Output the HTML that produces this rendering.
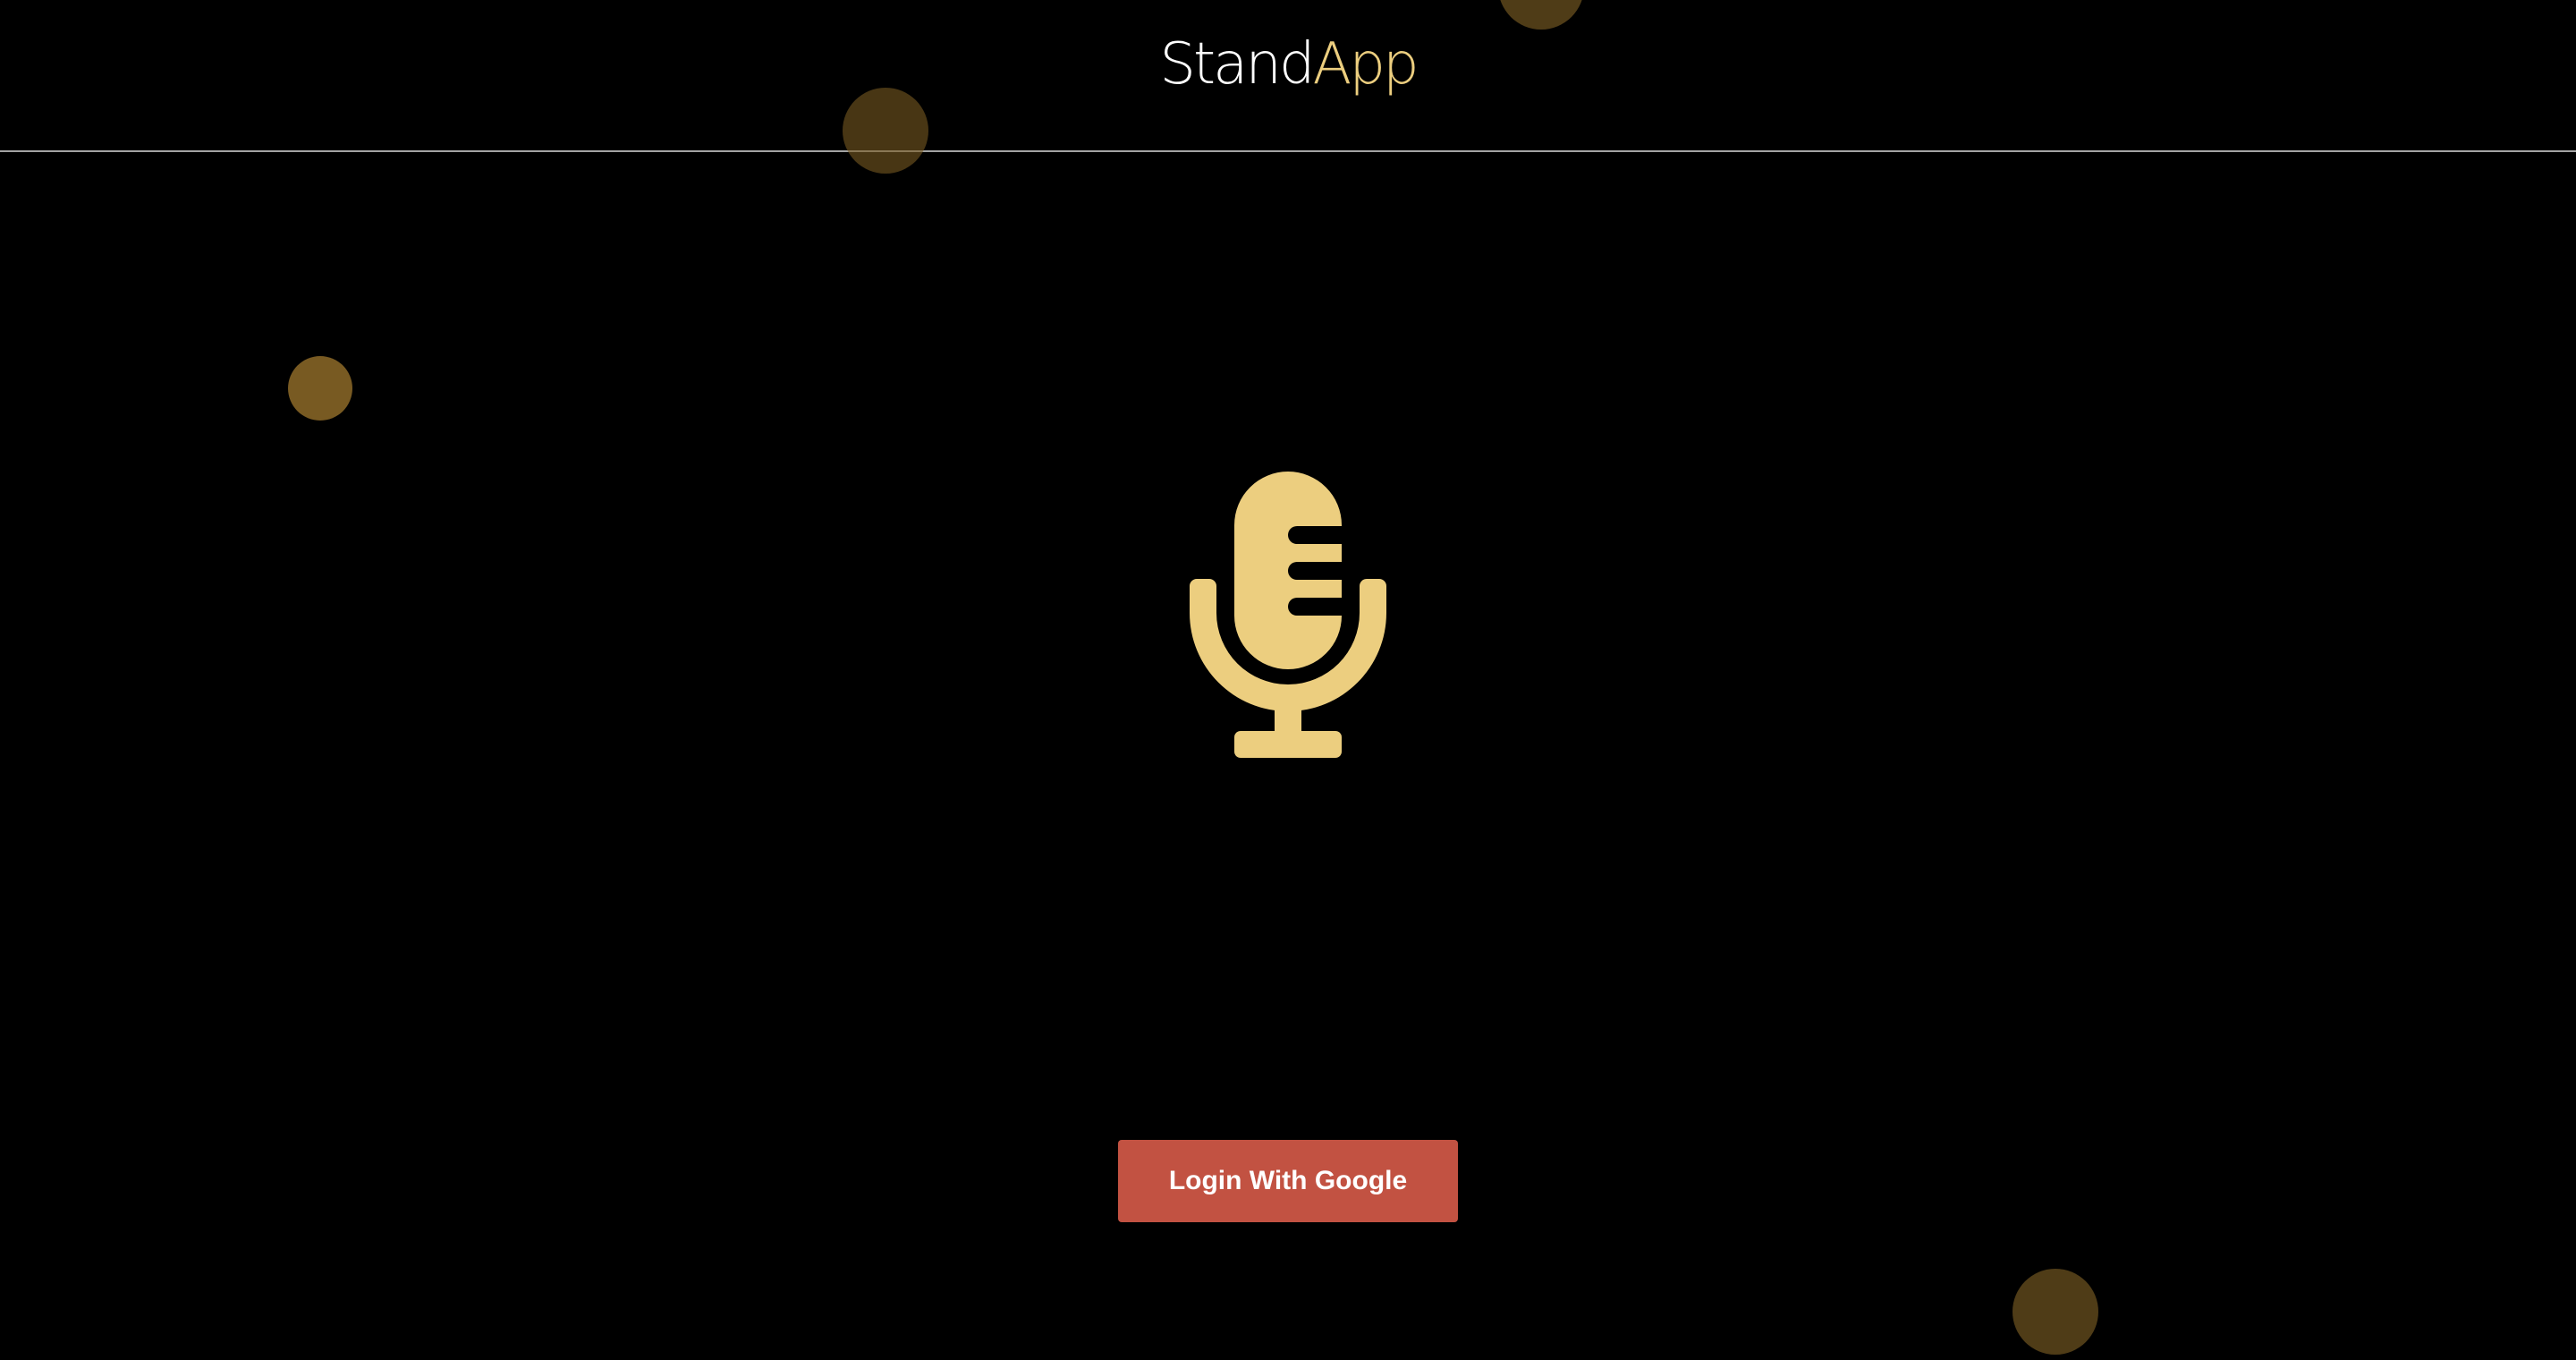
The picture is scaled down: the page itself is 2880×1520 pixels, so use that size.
<!DOCTYPE html>
<html><head><meta charset="utf-8"><style>
html,body{margin:0;padding:0;background:#000;width:2880px;height:1520px;overflow:hidden;position:relative}
.line{position:absolute;left:0;top:168px;width:2880px;height:2px;background:#a3a3a3}
.logo{position:absolute;left:0;width:2880px;top:22px;text-align:center;font-family:"DejaVu Sans","Liberation Sans",sans-serif;font-weight:200;font-size:64px;letter-spacing:-3px;line-height:100px;color:#fff}
.logo span{color:#ecce7f}
.c{position:absolute;border-radius:50%}
.btn{position:absolute;left:1250px;top:1274px;width:380px;height:92px;background:#c25242;border-radius:4px;color:#fff;font-family:"Liberation Sans",sans-serif;font-weight:bold;font-size:30px;line-height:92px;text-align:center}
</style></head><body>
<div class="logo">Stand<span>App</span></div>
<div class="line"></div>
<div class="c" style="left:1675px;top:-63px;width:96px;height:96px;background:#4f3c17"></div>
<div class="c" style="left:942px;top:98px;width:96px;height:96px;background:rgba(120,90,34,0.6)"></div>
<div class="c" style="left:322px;top:398px;width:72px;height:72px;background:#785a22"></div>
<div class="c" style="left:2250px;top:1418px;width:96px;height:96px;background:#4f3c17"></div>
<svg style="position:absolute;left:0;top:0" width="2880" height="1520">
<g fill="#ecce7f">
<path d="M1380 587 A60 60 0 0 1 1500 587 L1500 588 L1450 588 A10 10 0 0 0 1450 608 L1500 608 L1500 628 L1450 628 A10 10 0 0 0 1450 648 L1500 648 L1500 668 L1450 668 A10 10 0 0 0 1450 688 L1500 688 L1500 688 A60 60 0 0 1 1380 688 Z"/>
<path d="M1338 647 L1352 647 A8 8 0 0 1 1360 655 L1360 685 A80 80 0 0 0 1520 685 L1520 655 A8 8 0 0 1 1528 647 L1542 647 A8 8 0 0 1 1550 655 L1550 685 A110 110 0 0 1 1330 685 L1330 655 A8 8 0 0 1 1338 647 Z"/>
<rect x="1425" y="790" width="30" height="30"/>
<rect x="1380" y="817" width="120" height="30" rx="7"/>
</g></svg>
<div class="btn">Login With Google</div>
</body></html>
